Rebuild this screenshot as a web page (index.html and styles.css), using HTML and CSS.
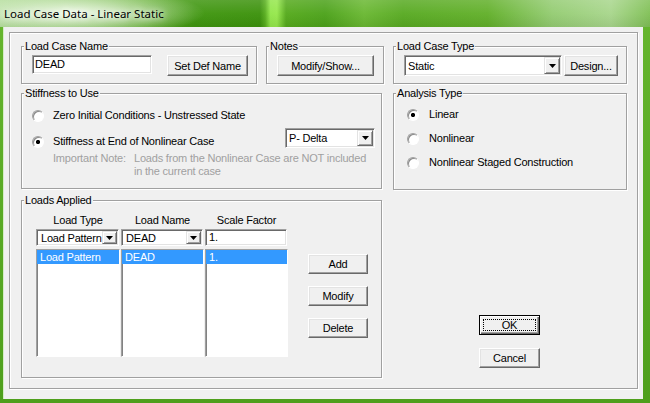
FILE: index.html
```html
<!DOCTYPE html>
<html>
<head>
  <title>Load Case Data - Linear Static</title>
  <link rel="stylesheet" href="styles.css">
</head>
<body>
  <div class="window">
    <div class="titlebar">
      <span class="title">Load Case Data - Linear Static</span>
    </div>

    <div class="client">
      <div class="frame">

        <!-- Top row: name, notes, type -->
        <div class="top-row">
          <fieldset class="group lcname">
            <legend>Load Case Name</legend>
            <div class="group-body">
              <div class="textbox name-box">DEAD</div>
              <button class="btn def-btn">Set Def Name</button>
            </div>
          </fieldset>

          <fieldset class="group notes">
            <legend>Notes</legend>
            <div class="group-body">
              <button class="btn notes-btn">Modify/Show...</button>
            </div>
          </fieldset>

          <fieldset class="group lctype">
            <legend>Load Case Type</legend>
            <div class="group-body">
              <div class="combo type-combo">
                <span class="value">Static</span>
                <span class="drop"><svg width="7" height="4"><polygon points="0,0 7,0 3.5,4"/></svg></span>
              </div>
              <button class="btn design-btn">Design...</button>
            </div>
          </fieldset>
        </div>

        <div class="main-row">
          <div class="col-left">
            <!-- Stiffness -->
            <fieldset class="group stiffness">
              <legend>Stiffness to Use</legend>
              <div class="stiff-body">
                <div class="opt first">
                  <span class="radio"></span>
                  <span class="opt-text">Zero Initial Conditions - Unstressed State</span>
                </div>
                <div class="opt-row">
                  <div class="opt">
                    <span class="radio on"></span>
                    <span class="opt-text">Stiffness at End of Nonlinear Case</span>
                  </div>
                  <div class="combo pdelta-combo">
                    <span class="value">P- Delta</span>
                    <span class="drop"><svg width="7" height="4"><polygon points="0,0 7,0 3.5,4"/></svg></span>
                  </div>
                </div>
                <div class="note">
                  <span class="note-label">Important Note:</span>
                  <span class="note-text">Loads from the Nonlinear Case are NOT included<br>in the current case</span>
                </div>
              </div>
            </fieldset>

            <!-- Loads applied -->
            <fieldset class="group loads">
              <legend>Loads Applied</legend>
              <div class="loads-body">
                <div class="load-table">
                  <div class="head">Load Type</div>
                  <div class="head">Load Name</div>
                  <div class="head">Scale Factor</div>

                  <div class="combo small-combo">
                    <span class="value">Load Pattern</span>
                    <span class="drop"><svg width="7" height="4"><polygon points="0,0 7,0 3.5,4"/></svg></span>
                  </div>
                  <div class="combo small-combo">
                    <span class="value">DEAD</span>
                    <span class="drop"><svg width="7" height="4"><polygon points="0,0 7,0 3.5,4"/></svg></span>
                  </div>
                  <div class="textbox small-box">1.</div>

                  <div class="list"><div class="item sel">Load Pattern</div></div>
                  <div class="list"><div class="item sel">DEAD</div></div>
                  <div class="list"><div class="item sel">1.</div></div>
                </div>

                <div class="side-buttons">
                  <button class="btn side-btn">Add</button>
                  <button class="btn side-btn">Modify</button>
                  <button class="btn side-btn">Delete</button>
                </div>
              </div>
            </fieldset>
          </div>

          <div class="col-right">
            <!-- Analysis type -->
            <fieldset class="group analysis">
              <legend>Analysis Type</legend>
              <div class="analysis-body">
                <div class="opt">
                  <span class="radio on"></span>
                  <span class="opt-text">Linear</span>
                </div>
                <div class="opt">
                  <span class="radio"></span>
                  <span class="opt-text">Nonlinear</span>
                </div>
                <div class="opt">
                  <span class="radio"></span>
                  <span class="opt-text">Nonlinear Staged Construction</span>
                </div>
              </div>
            </fieldset>

            <div class="dlg-buttons">
              <button class="btn default-btn">OK</button>
              <button class="btn">Cancel</button>
            </div>
          </div>
        </div>

      </div>
    </div>
  </div>
</body>
</html>
```

FILE: styles.css
```css
body {
  margin: 0;
  font-family: "Liberation Sans", Arial, sans-serif;
  font-size: 11px;
  letter-spacing: -0.2px;
  color: #000;
  background-color: #f0f0f0;
}

.window {
  width: 650px;
  height: 403px;
  overflow: hidden;
  background: linear-gradient(180deg, #66b62e, #4e9f1c);
}

/* Vista style glass title */
.titlebar {
  height: 27px;
  box-sizing: border-box;
  padding-left: 4px;
  display: flex;
  align-items: center;
  background:
    radial-gradient(ellipse 130px 24px at 75px 13px, rgba(244, 252, 238, 0.97), rgba(244, 252, 238, 0) 100%),
    linear-gradient(180deg, rgba(255, 255, 255, 0.15) 0%, rgba(255, 255, 255, 0.04) 50%, rgba(0, 0, 0, 0.06) 100%),
    linear-gradient(90deg, #a6d68a 0%, #5aaa26 22%, #3f960f 30%, #3c920c 40%, #58ae1e 40.8%, #92e64a 41.6%, #96e84c 42.6%, #55aa1c 44%, #4ca21a 50%, #6ab832 56%, #58aa22 62%, #62b02a 75%, #94cc72 85%, #a8d68c 94%, #80c056 100%);
}

.title {
  font-family: "Noto Sans", "Liberation Sans", sans-serif;
  font-size: 11.5px;
  letter-spacing: 0;
  text-shadow: 0 0 6px #fff, 0 0 10px #fff;
}

.client {
  width: 639px;
  height: 372px;
  margin-left: 4px;
  box-sizing: border-box;
  padding: 5px 0 0 5px;
  background-color: #f0f0f0;
  box-shadow: -1px 0 0 #d4ecc4;
}

.frame {
  width: 629px;
  height: 357px;
  box-sizing: border-box;
  padding: 7px 0 0 11px;
  border: 1px solid #a0a0a0;
  box-shadow: inset 1px 1px 0 #fff, 1px 1px 0 #fff;
}

/* group boxes */
.group {
  margin: 0;
  padding: 0;
  min-width: 0;
  box-sizing: border-box;
  border: 1px solid #a0a0a0;
  box-shadow: inset 1px 1px 0 #fff, 1px 1px 0 #fff;
}

.group legend {
  margin-left: 2px;
  padding: 0 1px;
  line-height: 13px;
  background-color: #f0f0f0;
}

.top-row {
  display: flex;
  gap: 9px;
}

.lcname { width: 236px; height: 44px; }
.notes { width: 118px; height: 44px; }
.lctype { width: 234px; height: 44px; }

.group-body {
  display: flex;
  align-items: flex-start;
  padding: 2px 0 0 10px;
}

.main-row {
  display: flex;
  gap: 11px;
  margin-top: 3px;
}

.col-left { width: 361px; }
.col-right { width: 234px; }

.stiffness { width: 361px; height: 102px; }
.analysis { width: 234px; height: 103px; }
.loads { width: 361px; height: 184px; margin-top: 5px; }

/* controls */
.btn {
  height: 21px;
  padding: 0;
  box-sizing: border-box;
  font-family: inherit;
  font-size: 11px;
  letter-spacing: -0.2px;
  color: #000;
  background-color: #f0f0f0;
  border: 1px solid;
  border-color: #fff #696969 #696969 #fff;
  box-shadow: inset -1px -1px 0 #a0a0a0, inset 1px 1px 0 #e3e3e3;
}

.def-btn { width: 81px; margin-left: 15px; }
.notes-btn { width: 97px; }
.design-btn { width: 54px; margin-left: 2px; }

.textbox {
  box-sizing: border-box;
  background-color: #fff;
  border: 1px solid;
  border-color: #a0a0a0 #fff #fff #a0a0a0;
  box-shadow: inset 1px 1px 0 #696969, inset -1px -1px 0 #e3e3e3;
  padding: 0 2px;
  white-space: nowrap;
}

.name-box {
  width: 120px;
  height: 19px;
  line-height: 17px;
}

.combo {
  display: flex;
  box-sizing: border-box;
  padding: 1px;
  background-color: #fff;
  border: 1px solid;
  border-color: #a0a0a0 #fff #fff #a0a0a0;
  box-shadow: inset 1px 1px 0 #696969, inset -1px -1px 0 #e3e3e3;
}

.combo .value {
  flex: 1;
  min-width: 0;
  overflow: hidden;
  white-space: nowrap;
  padding-left: 2px;
  display: flex;
  align-items: center;
}

.combo .drop {
  width: 16px;
  flex: none;
  box-sizing: border-box;
  display: flex;
  align-items: center;
  justify-content: center;
  background-color: #f0f0f0;
  border: 1px solid;
  border-color: #e3e3e3 #696969 #696969 #e3e3e3;
  box-shadow: inset 1px 1px 0 #fff, inset -1px -1px 0 #a0a0a0;
}

.combo .drop svg {
  display: block;
  fill: #000;
}

.type-combo { width: 158px; height: 21px; }
.pdelta-combo { width: 90px; height: 20px; margin-left: auto; margin-right: 6px; }

/* radio options */
.radio {
  width: 12px;
  height: 12px;
  flex: none;
  box-sizing: border-box;
  border-radius: 50%;
  border: 1px solid;
  border-color: #a0a0a0 #fff #fff #a0a0a0;
  background-color: #fff;
  box-shadow: inset 1px 1px 0 #8a8a8a;
}

.radio.on {
  background: radial-gradient(circle at center, #000 0, #000 1.8px, #fff 2.4px);
}

.opt {
  display: flex;
  align-items: center;
  height: 13px;
  line-height: 13px;
  white-space: nowrap;
}

.opt-text { margin-left: 9px; }

.stiff-body { padding-left: 10px; }
.stiff-body .opt.first { margin-top: 9px; }

.opt-row {
  display: flex;
  align-items: flex-end;
  margin-top: 6px;
}

.note {
  display: flex;
  margin-top: 4px;
  padding-left: 21px;
  color: #a0a0a0;
  line-height: 13px;
  white-space: nowrap;
}

.note-label { width: 81px; }

.analysis-body { padding-left: 13px; }
.analysis-body .opt { margin-top: 11px; }
.analysis-body .opt:first-child { margin-top: 8px; }
.analysis-body .opt-text { margin-left: 10px; }

/* loads table */
.loads-body {
  display: flex;
  padding-left: 14px;
  margin-top: 7px;
}

.load-table {
  display: grid;
  grid-template-columns: 84px 83px 83px;
  column-gap: 1px;
}

.head {
  text-align: center;
  line-height: 13px;
}

.small-combo,
.small-box {
  height: 17px;
  margin-top: 2px;
}

.small-combo,
.small-box { margin-right: 1px; }

.small-combo .drop { width: 15px; }
.small-combo .value { padding-left: 3px; }
.small-box { line-height: 15px; padding-left: 3px; }

.list {
  height: 108px;
  margin-top: 3px;
  box-sizing: border-box;
  background-color: #fff;
  border: 1px solid;
  border-color: #a0a0a0 #fff #fff #a0a0a0;
  box-shadow: inset 1px 0 0 #828282;
}

.item {
  height: 14px;
  line-height: 14px;
  padding-left: 3px;
  white-space: nowrap;
}

.item.sel {
  background-color: #3399ff;
  color: #fff;
}

.side-buttons {
  display: flex;
  flex-direction: column;
  gap: 12px;
  margin: 40px 0 0 20px;
}

.side-btn { width: 60px; height: 20px; }

.dlg-buttons {
  display: flex;
  flex-direction: column;
  gap: 13px;
  margin: 125px 0 0 86px;
}

.dlg-buttons .btn { width: 61px; height: 20px; }

.default-btn {
  border-color: #000;
  box-shadow: inset 1px 1px 0 #fff, inset -1px -1px 0 #696969, inset -2px -2px 0 #a0a0a0;
  outline: 1px dotted #000;
  outline-offset: -5px;
}
```
